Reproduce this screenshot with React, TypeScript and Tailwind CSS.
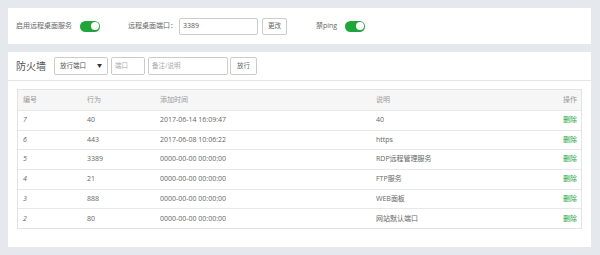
const rows = [
  { id: "7", port: "40", time: "2017-06-14 16:09:47", note: "40" },
  { id: "6", port: "443", time: "2017-06-08 10:06:22", note: "https" },
  { id: "5", port: "3389", time: "0000-00-00 00:00:00", note: "RDP远程管理服务" },
  { id: "4", port: "21", time: "0000-00-00 00:00:00", note: "FTP服务" },
  { id: "3", port: "888", time: "0000-00-00 00:00:00", note: "WEB面板" },
  { id: "2", port: "80", time: "0000-00-00 00:00:00", note: "网站默认端口" },
];

function Toggle() {
  return (
    <span className="relative inline-block h-[11px] w-[20px] rounded-full bg-[#20a53a]">
      <span className="absolute right-[1.5px] top-[1.5px] h-[8px] w-[8px] rounded-full bg-white" />
    </span>
  );
}

export default function App() {
  return (
    <div
      className="flex h-[255px] w-[600px] flex-col gap-[8px] bg-[#e5e8ec] p-[8px] pr-[9px] text-[#666]"
      style={{ fontFamily: '"Open Sans", "Noto Sans CJK SC", sans-serif' }}
    >
      {/* 远程桌面 */}
      <div className="flex h-[36px] items-center bg-white px-[8px] text-[7px]">
        <span>启用远程桌面服务</span>
        <span className="ml-[8px] flex">
          <Toggle />
        </span>
        <span className="ml-[28px]">远程桌面端口：</span>
        <div className="ml-[2px] flex h-[17px] w-[79px] items-center rounded-[2px] border border-[#ccc] px-[3px] text-[7px] text-[#555]">
          3389
        </div>
        <button className="ml-[4px] flex h-[17px] w-[25px] items-center justify-center rounded-[2px] border border-[#ccc] bg-white text-[6.5px] text-[#666]">
          更改
        </button>
        <span className="ml-[29px]">禁ping</span>
        <span className="ml-[8px] flex">
          <Toggle />
        </span>
      </div>

      {/* 防火墙 */}
      <div className="flex flex-1 flex-col bg-white">
        <div className="flex h-[29px] items-center border-b border-[#e6e6e6] px-[8px]">
          <span className="text-[10px] text-[#555]">防火墙</span>
          <div className="ml-[8px] flex h-[18px] w-[54px] items-center justify-between rounded-[2px] border border-[#ccc] px-[5px] text-[6.5px] text-[#555]">
            <span>放行端口</span>
            <span className="text-[5px] text-[#333]">▼</span>
          </div>
          <div className="ml-[3px] flex h-[18px] w-[34px] items-center rounded-[2px] border border-[#ccc] px-[3px] text-[6.5px] text-[#aaa]">
            端口
          </div>
          <div className="ml-[3px] flex h-[18px] w-[80px] items-center rounded-[2px] border border-[#ccc] px-[3px] text-[6.5px] text-[#aaa]">
            备注/说明
          </div>
          <button className="ml-[2px] flex h-[18px] w-[27px] items-center justify-center rounded-[2px] border border-[#ccc] bg-white text-[6.5px] text-[#666]">
            放行
          </button>
        </div>

        <div className="mx-[9px] mt-[8px] border border-[#e3e3e3] text-[7px]">
          <div className="grid h-[20px] grid-cols-[64px_73px_216px_1fr_40px] items-center bg-[#f6f6f6] text-[#999]">
            <span className="pl-[5px]">编号</span>
            <span className="pl-[5px]">行为</span>
            <span className="pl-[5px]">添加时间</span>
            <span className="pl-[5px]">说明</span>
            <span className="pr-[4px] text-right">操作</span>
          </div>
          {rows.map((r) => (
            <div
              key={r.id}
              className="grid h-[19.7px] grid-cols-[64px_73px_216px_1fr_40px] items-center border-t border-[#e8e8e8]"
            >
              <span className="pl-[5px] italic">{r.id}</span>
              <span className="pl-[5px]">{r.port}</span>
              <span className="pl-[5px]">{r.time}</span>
              <span className="pl-[5px]">{r.note}</span>
              <span className="pr-[4px] text-right text-[#20a53a]">删除</span>
            </div>
          ))}
        </div>
      </div>
    </div>
  );
}
